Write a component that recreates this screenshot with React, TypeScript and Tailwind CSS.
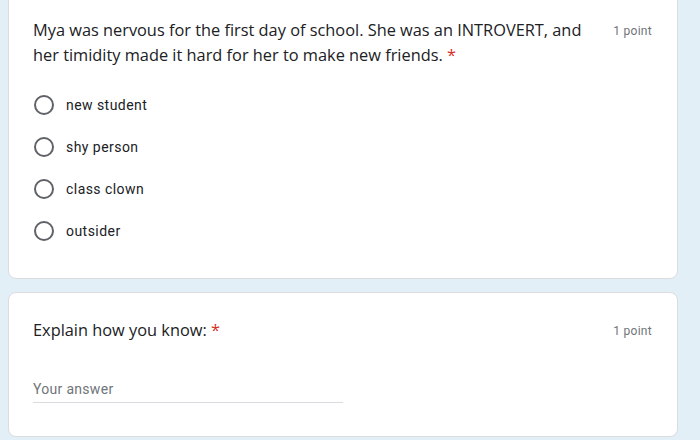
import React from 'react';

const options = ['new student', 'shy person', 'class clown', 'outsider'];

function Radio({ label }: { label: string }) {
  return (
    <label className="flex items-center h-[42px]">
      <span className="w-5 h-5 rounded-full border-2 border-[#5f6368] ml-[1px]" />
      <span className="ml-[12px] text-[14px] text-[#202124] tracking-[0.45px]">{label}</span>
    </label>
  );
}

export default function App() {
  return (
    <div
      className="w-[700px] h-[440px] overflow-hidden bg-[#e3eff6] pl-[8px] pr-[22px]"
      style={{ fontFamily: 'Roboto, Arial, sans-serif' }}
    >
      <div className="-mt-[7px] bg-white border border-[#dadce0] rounded-lg pl-[24px] pr-[25px] pt-[24px] pb-[26px]">
        <div className="flex justify-between items-start">
          <div className="w-[565px] text-[16.35px] leading-[25px] text-[#202124]" style={{ fontFamily: '"Open Sans", sans-serif' }}>
            Mya was nervous for the first day of school. She was an INTROVERT, and her timidity made it hard for her to make new friends.{' '}
            <span className="text-[#d93025]">*</span>
          </div>
          <div className="mt-[1px] text-[12px] tracking-[0.3px] text-[#70757a] leading-[25px]">1 point</div>
        </div>
        <div className="mt-[16px] flex flex-col">
          {options.map((o) => (
            <Radio key={o} label={o} />
          ))}
        </div>
      </div>

      <div className="mt-[13px] bg-white border border-[#dadce0] rounded-lg pl-[24px] pr-[25px] pt-[25px] pb-[33px]">
        <div className="flex justify-between items-center">
          <div className="text-[16.35px] leading-[25px] text-[#202124]" style={{ fontFamily: '"Open Sans", sans-serif' }}>
            Explain how you know: <span className="text-[#d93025]">*</span>
          </div>
          <div className="text-[12px] tracking-[0.3px] text-[#70757a]">1 point</div>
        </div>
        <div className="mt-[36px] w-[310px] border-b border-[#dadce0] pb-[2px] text-[14px] tracking-[0.3px] text-[#70757a]">
          Your answer
        </div>
      </div>
    </div>
  );
}
